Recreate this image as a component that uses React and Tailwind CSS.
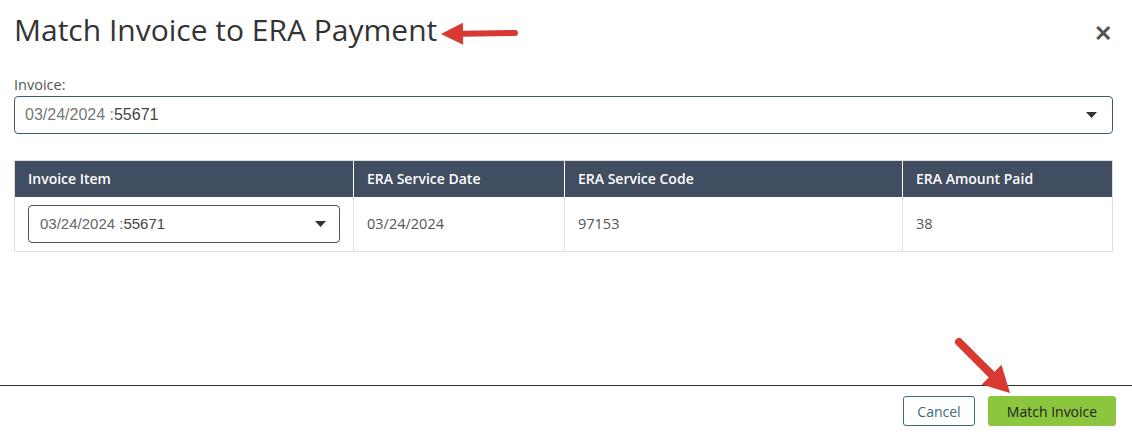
import React from 'react';

const Caret = () => (
    <svg width="11" height="6" viewBox="0 0 11 6" className="shrink-0"><path d="M0 0h11L5.5 6z" fill="#333" /></svg>
);

function Arrow({ x1, y1, x2, y2, w = 6, L = 20, W = 11 }) {
    // red pointer drawn over the screenshot
    const ang = Math.atan2(y2 - y1, x2 - x1);
    const bx = x2 - Math.cos(ang) * L, by = y2 - Math.sin(ang) * L;
    const px = -Math.sin(ang) * W, py = Math.cos(ang) * W;
    return (
        <svg width="100%" height="100%">
            <line x1={x1} y1={y1} x2={bx} y2={by} stroke="#d63a33" strokeWidth={w} strokeLinecap="round" />
            <polygon points={`${x2},${y2} ${bx + px},${by + py} ${bx - px},${by - py}`} fill="#d63a33" />
        </svg>
    );
}

export default function App() {
    const th = 'text-left px-[13px] text-[14px] font-semibold text-white border-r border-white last:border-r-0';
    const td = 'px-[13px] text-[14.5px] text-[#555] border-r border-[#e3e3e3] last:border-r-0';
    return (
        <div className="relative w-[1132px] h-[434px] bg-white overflow-hidden" style={{ fontFamily: '"Open Sans", sans-serif' }}>
            <div className="flex items-start justify-between pl-[14px] pr-[20px] pt-[10px]">
                <h1 className="text-[30px] leading-[40px] text-[#333] font-normal">Match Invoice to ERA Payment</h1>
                <span className="text-[#555] text-[22px] font-bold leading-none mt-[11px]">✕</span>
            </div>

            <div className="pl-[14px] pr-[19px] pt-[25px]">
                <label className="block text-[14.5px] text-[#555] leading-[20px]">Invoice:</label>
                <div className="mt-[1px] h-[38px] border border-[#3c5d6e] rounded-[4px] flex items-center justify-between pl-[10px] pr-[15px]">
                    <span className="text-[16px] text-[#777]" style={{ fontFamily: '"Liberation Sans", Arial, sans-serif' }}>03/24/2024 :<span className="text-[#444]">55671</span></span>
                    <Caret />
                </div>

                <table className="mt-[26px] w-full border border-[#dcdcdc] border-collapse">
                    <thead>
                        <tr className="h-[36px] bg-[#414d60]">
                            <th className={`${th} w-[339px]`}>Invoice Item</th>
                            <th className={`${th} w-[211px]`}>ERA Service Date</th>
                            <th className={`${th} w-[338px]`}>ERA Service Code</th>
                            <th className={th}>ERA Amount Paid</th>
                        </tr>
                    </thead>
                    <tbody>
                        <tr className="h-[55px]">
                            <td className={td}>
                                <div className="h-[38px] border border-[#555] rounded-[4px] flex items-center justify-between pl-[11px] pr-[13px]">
                                    <span className="text-[15px] text-[#666]" style={{ fontFamily: '"Liberation Sans", Arial, sans-serif' }}>03/24/2024 :<span className="text-[#444]">55671</span></span>
                                    <Caret />
                                </div>
                            </td>
                            <td className={td}>03/24/2024</td>
                            <td className={td}>97153</td>
                            <td className={td}>38</td>
                        </tr>
                    </tbody>
                </table>
            </div>

            <div className="mt-[133px] border-t-[1.5px] border-[#333] flex justify-end gap-[13px] pt-[10px] pr-[16px]">
                <button className="h-[30px] w-[72px] border border-[#3c6a7a] rounded-[3px] text-[14px] text-[#3c6a7a]">Cancel</button>
                <button className="h-[30px] w-[128px] bg-[#8cc63f] rounded-[3px] text-[14px] text-[#222]">Match Invoice</button>
            </div>

            <div className="absolute inset-0 pointer-events-none">
                <Arrow x1={515} y1={33} x2={441} y2={34} w={6} L={22} W={11} />
            </div>
            <div className="absolute inset-0 pointer-events-none">
                <Arrow x1={959} y1={342} x2={1010} y2={393} w={8} L={26} W={14} />
            </div>
        </div>
    );
}
